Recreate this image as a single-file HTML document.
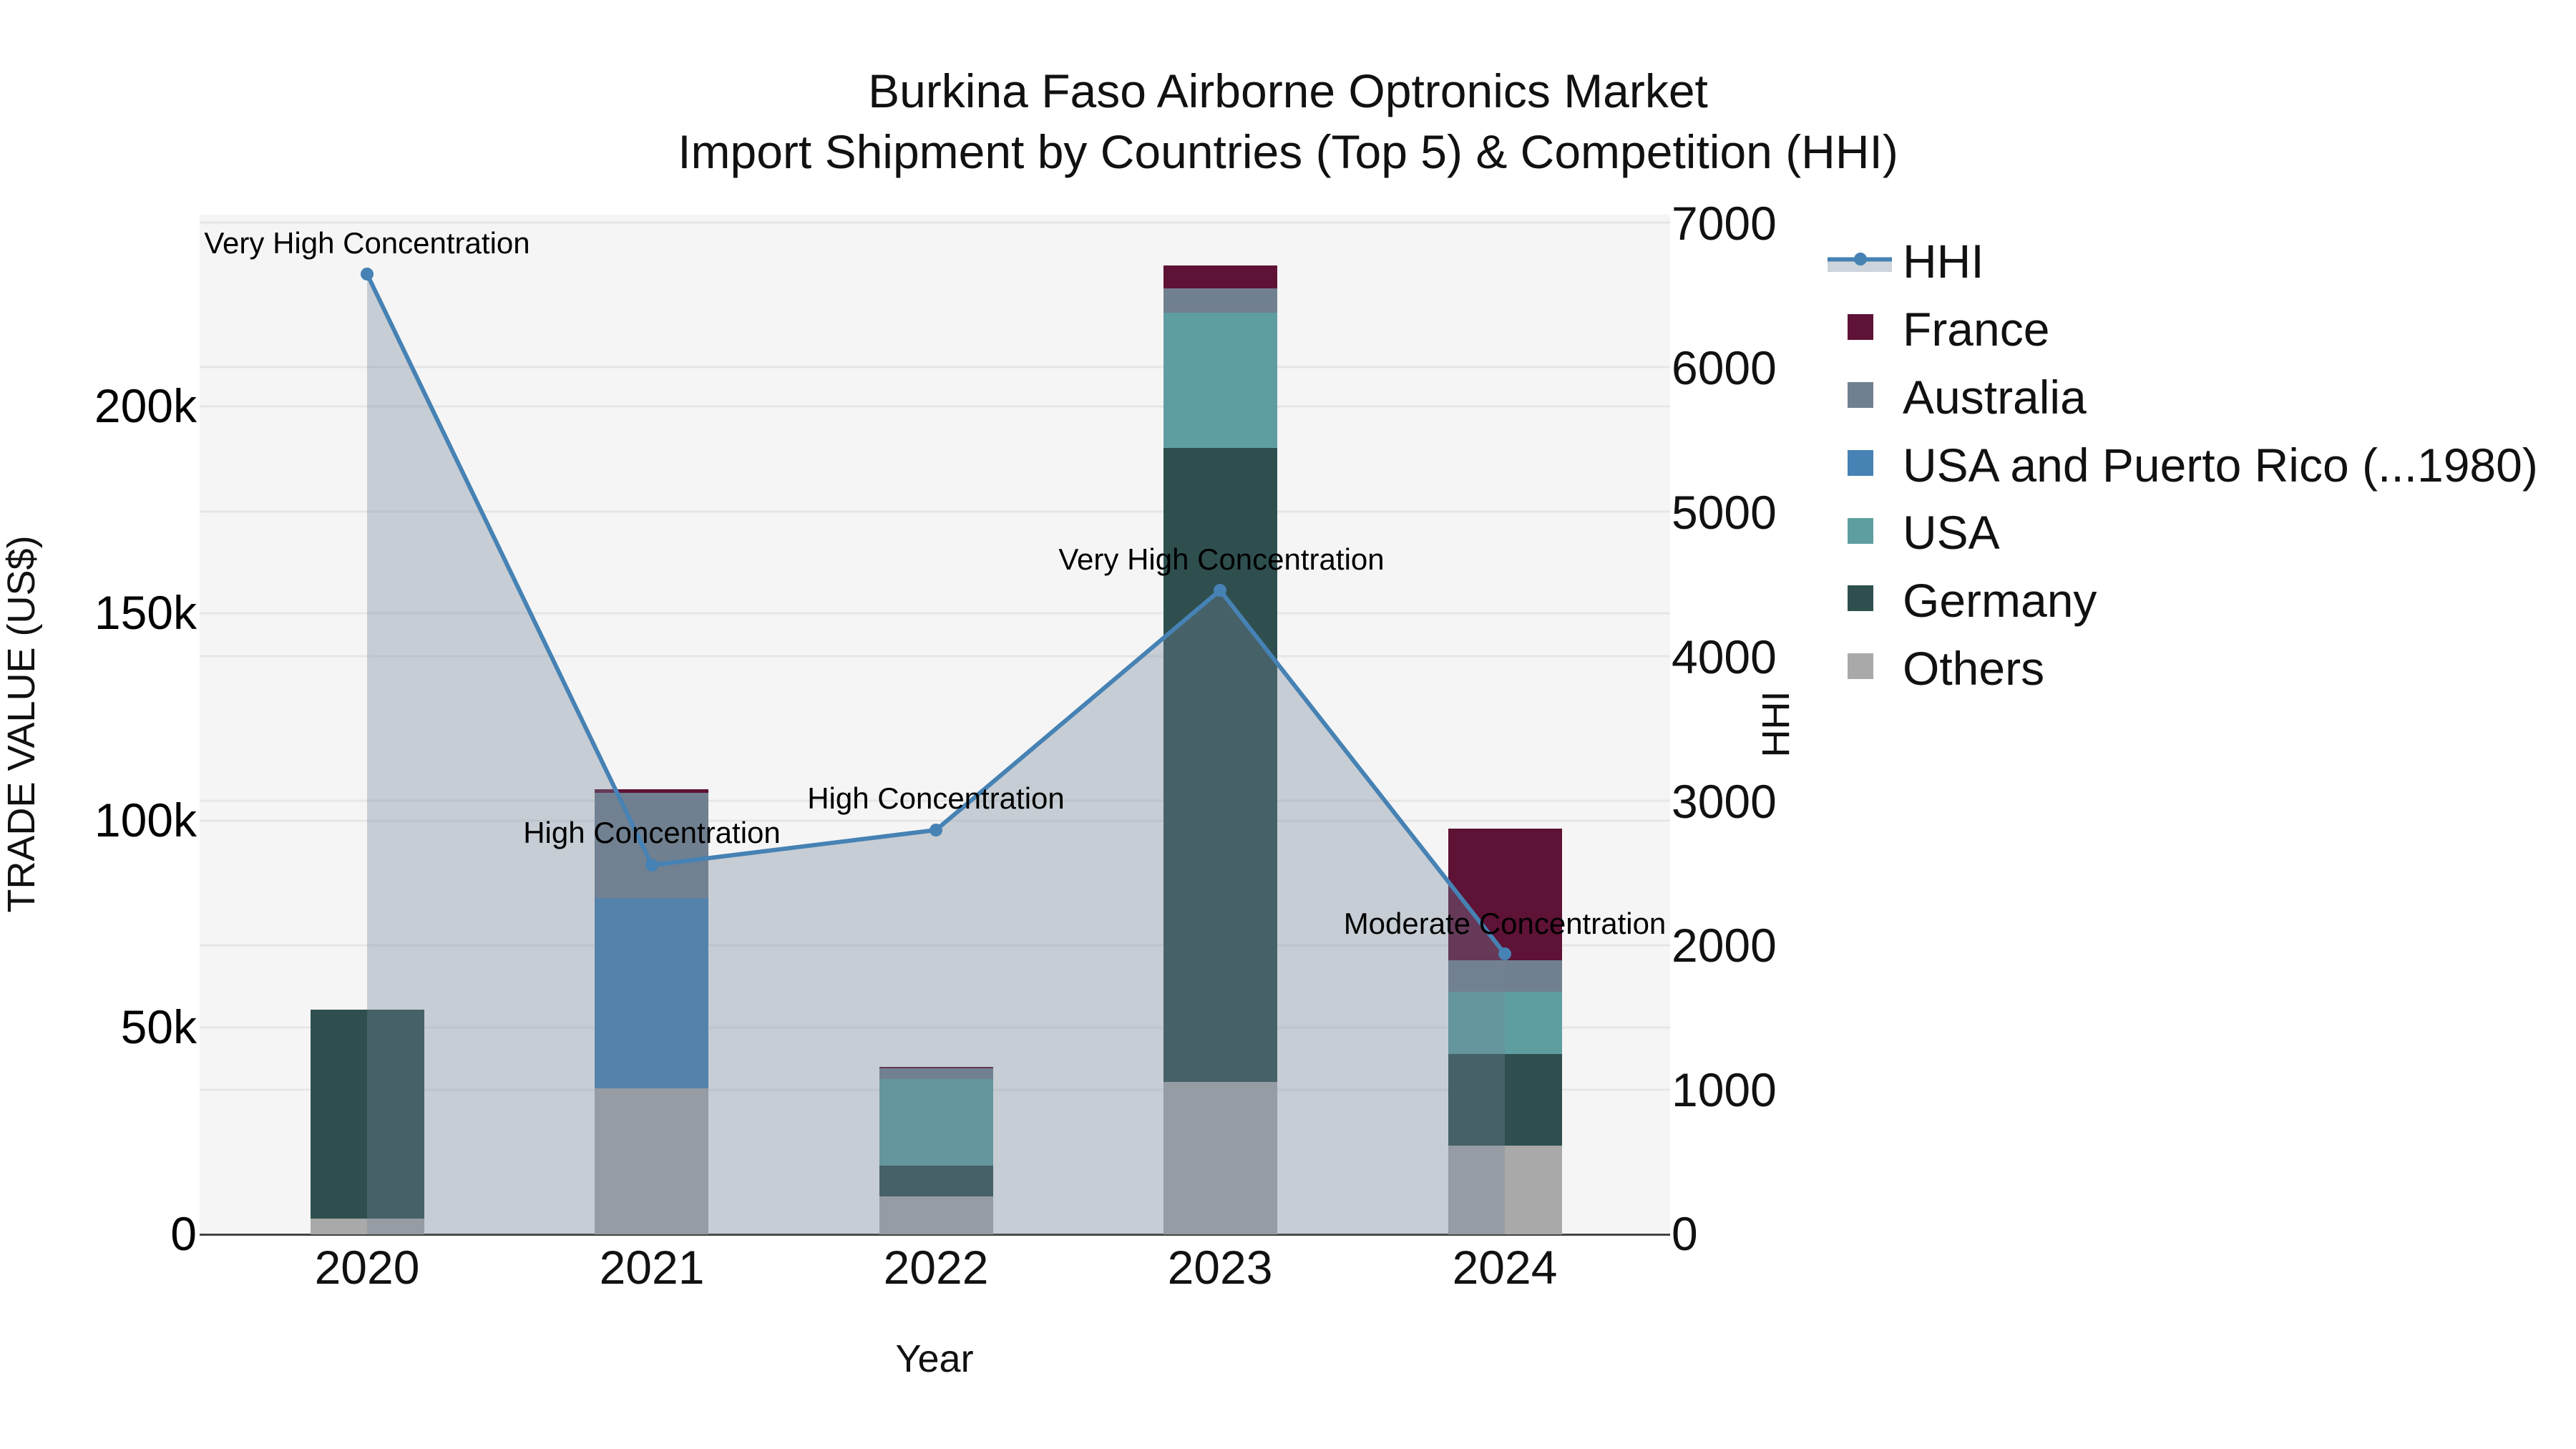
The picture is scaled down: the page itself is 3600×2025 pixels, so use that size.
<!DOCTYPE html>
<html><head><meta charset="utf-8"><style>
html,body{margin:0;padding:0;background:#fff}
svg{display:block}
text{font-family:"Liberation Sans",sans-serif}
</style></head><body>
<svg xmlns="http://www.w3.org/2000/svg" width="3600" height="2025" viewBox="0 0 3600 2025">
<rect width="3600" height="2025" fill="#fff"/>
<rect x="279" y="300" width="2055" height="1425" fill="#f5f5f5"/>
<g stroke="#e6e6e6" stroke-width="3">
<path d="M279 1436H2334M279 1147H2334M279 857H2334M279 568H2334"/>
<path d="M279 1523H2334M279 1321H2334M279 1119H2334M279 917H2334M279 715H2334M279 513H2334M279 311H2334"/>
</g>
<path d="M279 1725.5H2334" stroke="#444" stroke-width="3"/>
<g>
<rect x="434" y="1411" width="159" height="292" fill="#2f4f4f"/>
<rect x="434" y="1703" width="159" height="22" fill="#a9a9a9"/>
<rect x="831" y="1103" width="159" height="5" fill="#5e1235"/>
<rect x="831" y="1108" width="159" height="147" fill="#708090"/>
<rect x="831" y="1255" width="159" height="266" fill="#4682b4"/>
<rect x="831" y="1521" width="159" height="204" fill="#a9a9a9"/>
<rect x="1229" y="1491" width="159" height="2" fill="#5e1235"/>
<rect x="1229" y="1493" width="159" height="15" fill="#708090"/>
<rect x="1229" y="1508" width="159" height="121" fill="#5f9ea0"/>
<rect x="1229" y="1629" width="159" height="43" fill="#2f4f4f"/>
<rect x="1229" y="1672" width="159" height="53" fill="#a9a9a9"/>
<rect x="1626" y="371" width="159" height="32" fill="#5e1235"/>
<rect x="1626" y="403" width="159" height="34" fill="#708090"/>
<rect x="1626" y="437" width="159" height="189" fill="#5f9ea0"/>
<rect x="1626" y="626" width="159" height="886" fill="#2f4f4f"/>
<rect x="1626" y="1512" width="159" height="213" fill="#a9a9a9"/>
<rect x="2024" y="1158" width="159" height="184" fill="#5e1235"/>
<rect x="2024" y="1342" width="159" height="44" fill="#708090"/>
<rect x="2024" y="1386" width="159" height="87" fill="#5f9ea0"/>
<rect x="2024" y="1473" width="159" height="128" fill="#2f4f4f"/>
<rect x="2024" y="1601" width="159" height="124" fill="#a9a9a9"/>
</g>
<path d="M513 383L911 1209L1308 1160L1705 825L2103 1333V1725H513Z" fill="#748397" fill-opacity="0.35"/>
<path d="M513 383L911 1209L1308 1160L1705 825L2103 1333" fill="none" stroke="#4682b4" stroke-width="6" stroke-linejoin="round"/>
<g fill="#4682b4">
<circle cx="513" cy="383" r="9"/><circle cx="911" cy="1209" r="9"/><circle cx="1308" cy="1160" r="9"/><circle cx="1705" cy="825" r="9"/><circle cx="2103" cy="1333" r="9"/>
</g>
<g font-size="42" fill="#000" text-anchor="middle">
<text x="513" y="354">Very High Concentration</text>
<text x="911" y="1178">High Concentration</text>
<text x="1308" y="1130">High Concentration</text>
<text x="1707" y="796">Very High Concentration</text>
<text x="2103" y="1305">Moderate Concentration</text>
</g>
<g font-size="66" fill="#111" text-anchor="middle">
<text x="1800" y="150">Burkina Faso Airborne Optronics Market</text>
<text x="1800" y="235">Import Shipment by Countries (Top 5) &amp; Competition (HHI)</text>
</g>
<g font-size="66" fill="#000" text-anchor="end">
<text x="275" y="1747">0</text>
<text x="275" y="1458">50k</text>
<text x="275" y="1169">100k</text>
<text x="275" y="879">150k</text>
<text x="275" y="590">200k</text>
</g>
<g font-size="66" fill="#111">
<text x="2336" y="1747">0</text>
<text x="2336" y="1546">1000</text>
<text x="2336" y="1344">2000</text>
<text x="2336" y="1143">3000</text>
<text x="2336" y="941">4000</text>
<text x="2336" y="739">5000</text>
<text x="2336" y="537">6000</text>
<text x="2336" y="335">7000</text>
</g>
<g font-size="66" fill="#111" text-anchor="middle">
<text x="513" y="1794">2020</text>
<text x="911" y="1794">2021</text>
<text x="1308" y="1794">2022</text>
<text x="1705" y="1794">2023</text>
<text x="2103" y="1794">2024</text>
</g>
<text x="1306" y="1917" font-size="54" fill="#111" text-anchor="middle">Year</text>
<text transform="translate(48 1012) rotate(-90)" font-size="54" fill="#111" text-anchor="middle">TRADE VALUE (US$)</text>
<text transform="translate(2500 1012) rotate(-90)" font-size="54" fill="#111" text-anchor="middle">HHI</text>
<rect x="2554" y="362" width="90" height="18" fill="#748397" fill-opacity="0.35"/>
<path d="M2554 362.5H2644" stroke="#4682b4" stroke-width="6"/>
<circle cx="2600" cy="362" r="9" fill="#4682b4"/>
<rect x="2582" y="439" width="36" height="36" fill="#5e1235"/>
<rect x="2582" y="534" width="36" height="36" fill="#708090"/>
<rect x="2582" y="629" width="36" height="36" fill="#4682b4"/>
<rect x="2582" y="724" width="36" height="36" fill="#5f9ea0"/>
<rect x="2582" y="818" width="36" height="36" fill="#2f4f4f"/>
<rect x="2582" y="913" width="36" height="36" fill="#a9a9a9"/>
<g font-size="66" fill="#111">
<text x="2659" y="388">HHI</text>
<text x="2659" y="483">France</text>
<text x="2659" y="578">Australia</text>
<text x="2659" y="673">USA and Puerto Rico (...1980)</text>
<text x="2659" y="767">USA</text>
<text x="2659" y="862">Germany</text>
<text x="2659" y="957">Others</text>
</g>
</svg>
</body></html>
